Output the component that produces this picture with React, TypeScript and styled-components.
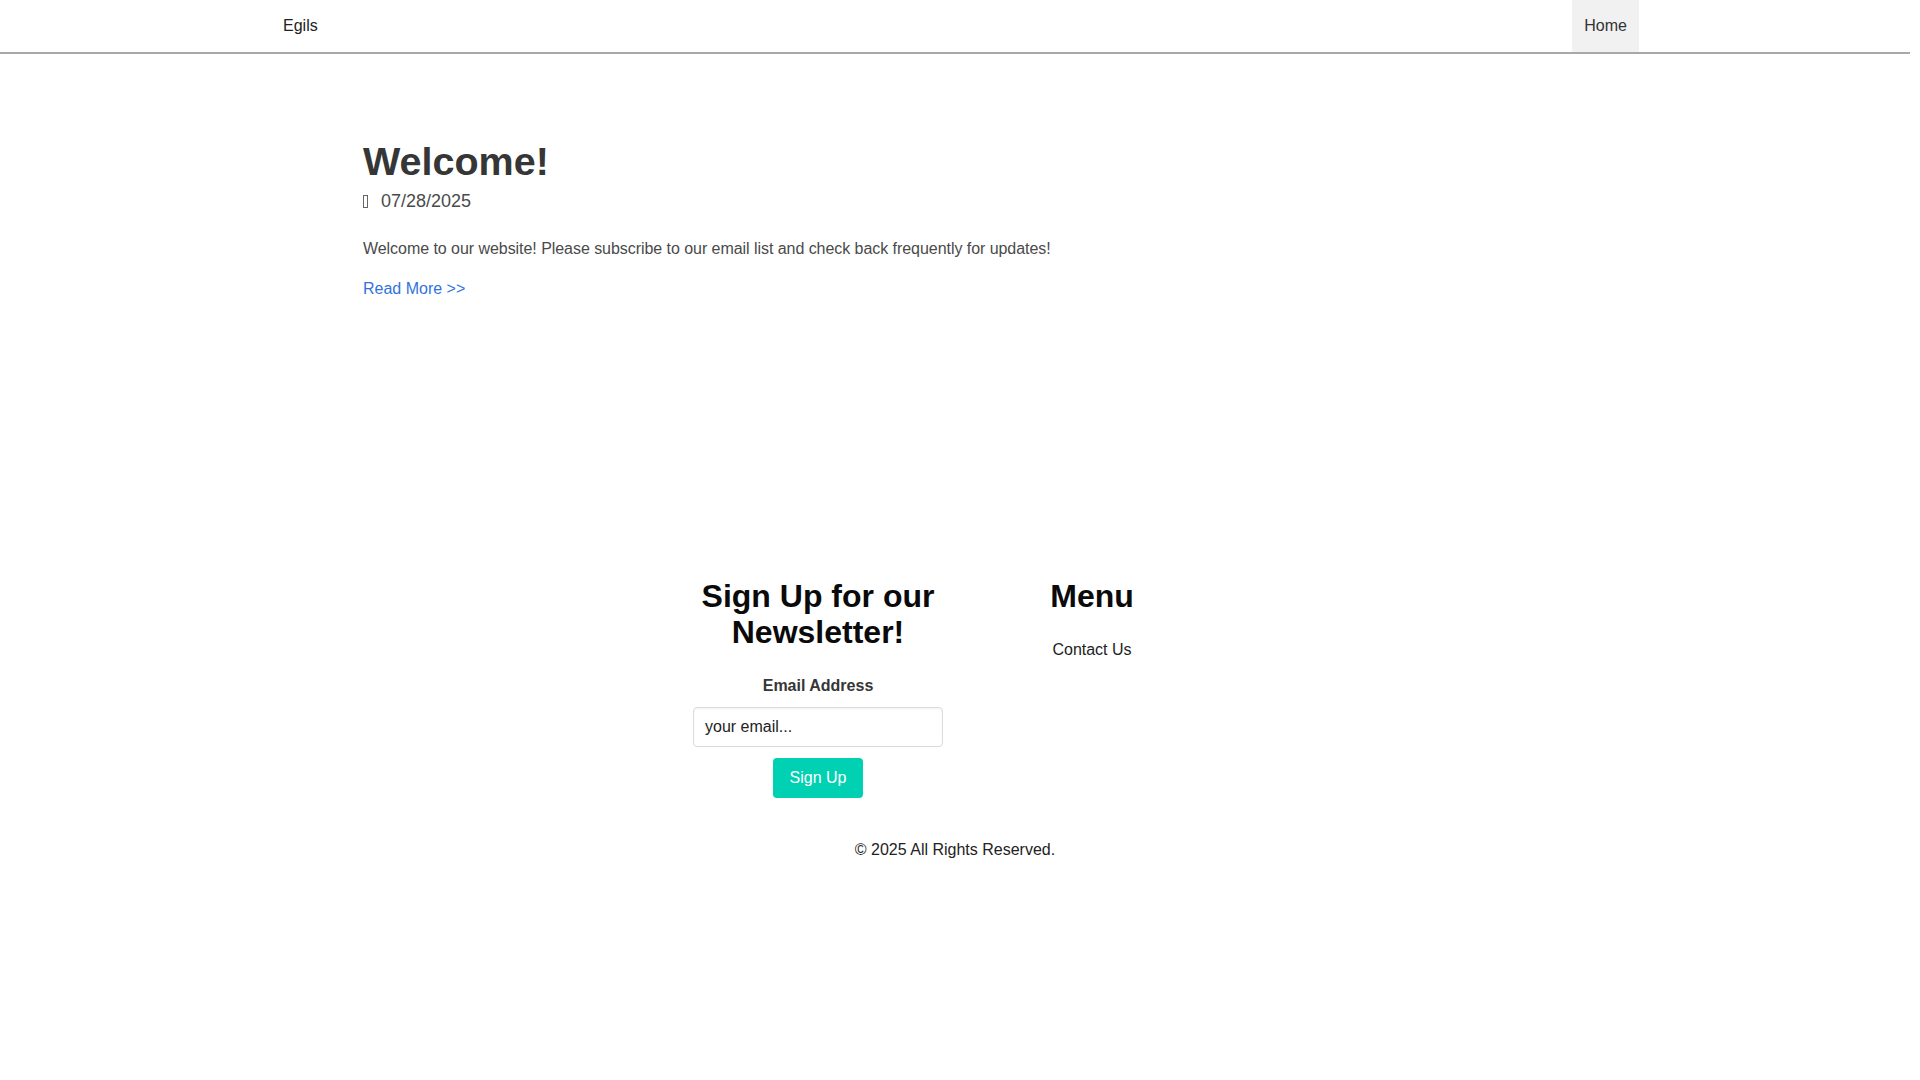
import styled, { createGlobalStyle } from 'styled-components';

const GlobalStyle = createGlobalStyle`
  html, body {
    margin: 0;
    padding: 0;
    background: #fff;
  }
  body {
    font-family: "Liberation Sans", Arial, sans-serif;
    font-size: 16px;
    color: #4a4a4a;
  }
  * {
    box-sizing: border-box;
  }
`;

const Page = styled.div`
  width: 1910px;
  min-height: 1080px;
  background: #fff;
`;

const Navbar = styled.nav`
  height: 54px;
  border-bottom: 2px solid #a8a8a8;
  display: flex;
  justify-content: space-between;
  align-items: stretch;
  padding: 0 271px;
`;

const NavItem = styled.a<{ $active?: boolean }>`
  display: flex;
  align-items: center;
  padding: 0 12px;
  height: 52px;
  line-height: 24px;
  font-size: 16px;
  color: ${(p) => (p.$active ? '#333' : '#222')};
  background: ${(p) => (p.$active ? '#f1f1f1' : 'transparent')};
  text-decoration: none;
  cursor: pointer;
`;

const Main = styled.section`
  padding: 85px 0 0 363px;
`;

const Title = styled.h1`
  margin: 0;
  font-size: 39.5px;
  line-height: 45px;
  font-weight: 700;
  color: #363636;
`;

const DateLine = styled.div`
  margin-top: 4px;
  display: flex;
  align-items: center;
  font-size: 18px;
  line-height: 27px;
  color: #4a4a4a;
`;

// icon font never loaded, so the glyph shows as an empty box
const MissingIcon = styled.span`
  display: inline-block;
  width: 5px;
  height: 13px;
  border: 1px solid #666;
  margin-right: 13px;
  margin-top: -1px;
`;

const Body = styled.p`
  margin: 22px 0 0;
  font-size: 16px;
  line-height: 24px;
  letter-spacing: -0.05px;
  color: #4a4a4a;
`;

const ReadMore = styled.a`
  display: inline-block;
  margin-top: 16px;
  font-size: 16px;
  line-height: 24px;
  color: #3273dc;
  text-decoration: none;
  cursor: pointer;
`;

const Footer = styled.footer`
  margin-top: 277px;
  display: flex;
  flex-direction: column;
  align-items: center;
`;

const Columns = styled.div`
  display: flex;
  justify-content: center;
`;

const Column = styled.div`
  width: 274px;
  padding: 0 12px;
  display: flex;
  flex-direction: column;
  align-items: center;
  text-align: center;
`;

const FooterTitle = styled.h2`
  margin: 0;
  font-size: 32px;
  line-height: 36px;
  font-weight: 700;
  color: #0a0a0a;
`;

const Label = styled.label`
  margin-top: 24px;
  font-size: 16px;
  line-height: 24px;
  font-weight: 700;
  color: #363636;
`;

const EmailInput = styled.input`
  margin-top: 9px;
  width: 100%;
  height: 40px;
  padding: 0 11px;
  border: 1px solid #dbdbdb;
  border-radius: 4px;
  box-shadow: inset 0 1px 2px rgba(10, 10, 10, 0.05);
  font-family: "Liberation Sans", Arial, sans-serif;
  font-size: 16px;
  color: #363636;
  outline: none;

  &::placeholder {
    color: #222;
    opacity: 1;
  }
`;

const SignUpButton = styled.button`
  margin-top: 11px;
  height: 40px;
  padding: 0 17px;
  border: none;
  border-radius: 4px;
  background: #00d1b2;
  color: #fff;
  font-family: "Liberation Sans", Arial, sans-serif;
  font-size: 16px;
  cursor: pointer;
`;

const MenuLink = styled.a`
  margin-top: 24px;
  font-size: 16px;
  line-height: 24px;
  color: #222;
  text-decoration: none;
  cursor: pointer;
`;

const Copyright = styled.p`
  margin: 40px 0 0;
  font-size: 16px;
  line-height: 24px;
  color: #222;
  text-align: center;
`;

export default function App() {
  return (
    <Page>
      <GlobalStyle />
      <Navbar>
        <NavItem>Egils</NavItem>
        <NavItem $active>Home</NavItem>
      </Navbar>

      <Main>
        <Title>Welcome!</Title>
        <DateLine>
          <MissingIcon />
          07/28/2025
        </DateLine>
        <Body>
          Welcome to our website! Please subscribe to our email list and check back frequently for updates!
        </Body>
        <ReadMore>Read More &gt;&gt;</ReadMore>
      </Main>

      <Footer>
        <Columns>
          <Column>
            <FooterTitle>Sign Up for our Newsletter!</FooterTitle>
            <Label htmlFor="email">Email Address</Label>
            <EmailInput id="email" type="email" placeholder="your email..." />
            <SignUpButton>Sign Up</SignUpButton>
          </Column>
          <Column>
            <FooterTitle>Menu</FooterTitle>
            <MenuLink>Contact Us</MenuLink>
          </Column>
        </Columns>
        <Copyright>© 2025 All Rights Reserved.</Copyright>
      </Footer>
    </Page>
  );
}
